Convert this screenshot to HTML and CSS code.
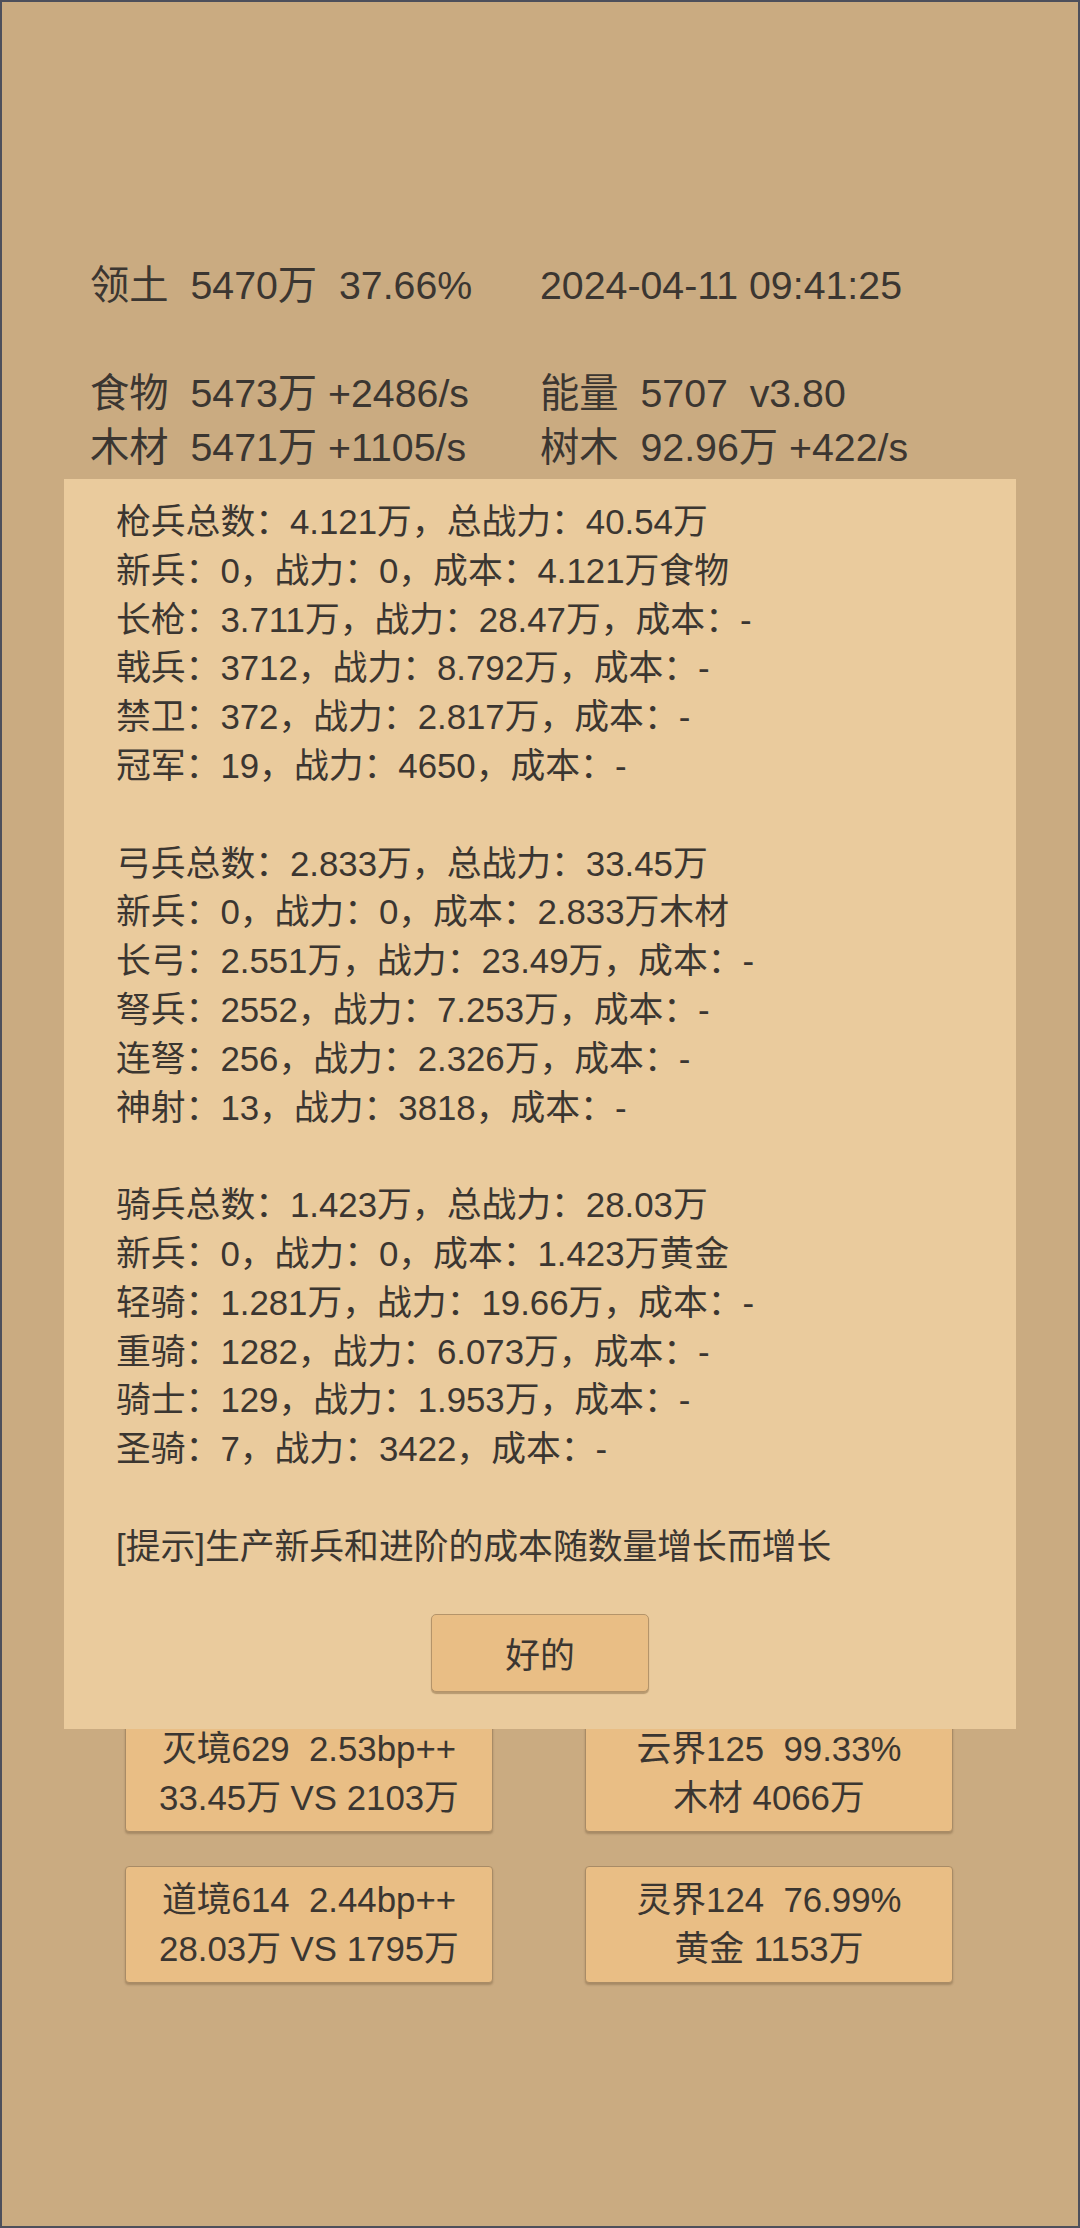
FILE: index.html
```html
<!DOCTYPE html>
<html lang="zh-CN">
<head>
<meta charset="utf-8">
<title>领土</title>
<link rel="stylesheet" href="styles.css">
</head>
<body>
<div class="screen">
  <div class="stats">
    <div class="row"><span class="cell">领土  5470万  37.66%</span><span class="cell">2024-04-11 09:41:25</span></div>
    <div class="row"></div>
    <div class="row"><span class="cell">食物  5473万 +2486/s</span><span class="cell">能量  5707  v3.80</span></div>
    <div class="row"><span class="cell">木材  5471万 +1105/s</span><span class="cell">树木  92.96万 +422/s</span></div>
  </div>

  <div class="realms">
    <div class="card"><div>灭境629  2.53bp++</div><div>33.45万 VS 2103万</div></div>
    <div class="card"><div>云界125  99.33%</div><div>木材 4066万</div></div>
    <div class="card"><div>道境614  2.44bp++</div><div>28.03万 VS 1795万</div></div>
    <div class="card"><div>灵界124  76.99%</div><div>黄金 1153万</div></div>
  </div>

  <div class="dialog">
    <div class="lines">
      <div class="line">枪兵总数：4.121万，总战力：40.54万</div>
      <div class="line">新兵：0，战力：0，成本：4.121万食物</div>
      <div class="line">长枪：3.711万，战力：28.47万，成本：-</div>
      <div class="line">戟兵：3712，战力：8.792万，成本：-</div>
      <div class="line">禁卫：372，战力：2.817万，成本：-</div>
      <div class="line">冠军：19，战力：4650，成本：-</div>
      <div class="line"></div>
      <div class="line">弓兵总数：2.833万，总战力：33.45万</div>
      <div class="line">新兵：0，战力：0，成本：2.833万木材</div>
      <div class="line">长弓：2.551万，战力：23.49万，成本：-</div>
      <div class="line">弩兵：2552，战力：7.253万，成本：-</div>
      <div class="line">连弩：256，战力：2.326万，成本：-</div>
      <div class="line">神射：13，战力：3818，成本：-</div>
      <div class="line"></div>
      <div class="line">骑兵总数：1.423万，总战力：28.03万</div>
      <div class="line">新兵：0，战力：0，成本：1.423万黄金</div>
      <div class="line">轻骑：1.281万，战力：19.66万，成本：-</div>
      <div class="line">重骑：1282，战力：6.073万，成本：-</div>
      <div class="line">骑士：129，战力：1.953万，成本：-</div>
      <div class="line">圣骑：7，战力：3422，成本：-</div>
      <div class="line"></div>
      <div class="line">[提示]生产新兵和进阶的成本随数量增长而增长</div>
    </div>
    <div class="actions"><button class="ok">好的</button></div>
  </div>
</div>
</body>
</html>
```

FILE: styles.css
```css
html, body {
  margin: 0;
  padding: 0;
}
body {
  background: #caab81;
  font-family: "Liberation Sans", "Noto Sans CJK SC", sans-serif;
  color: #3b3631;
}
.screen {
  position: relative;
  box-sizing: border-box;
  width: 1080px;
  height: 2228px;
  border: 2px solid #4d4f5b;
  background: #caab81;
  overflow: hidden;
}
.stats {
  padding: 256px 0 0 88px;
  font-size: 39.3px;
}
.row {
  display: grid;
  grid-template-columns: 450px 450px;
  height: 54px;
  line-height: 54px;
  white-space: pre;
}
.realms {
  margin: 1241px 0 0 123px;
  display: grid;
  grid-template-columns: 368px 368px;
  column-gap: 92px;
  row-gap: 34px;
}
.card {
  box-sizing: border-box;
  height: 117px;
  padding: 9px 0;
  background: #e9be85;
  border: 1px solid #a88b66;
  border-radius: 4px;
  box-shadow: 0 2px 2px rgba(60, 40, 20, 0.25);
  text-align: center;
  font-size: 34.8px;
  line-height: 48.8px;
  white-space: pre;
}
.dialog {
  position: absolute;
  top: 477px;
  left: 62px;
  width: 952px;
  height: 1250px;
  box-sizing: border-box;
  padding: 19px 0 0 52px;
  background: #eacb9d;
  font-size: 34.8px;
}
.line {
  height: 48.8px;
  line-height: 48.8px;
  white-space: pre;
}
.actions {
  display: flex;
  justify-content: center;
  padding-right: 52px;
  margin-top: 42px;
}
.ok {
  width: 218px;
  height: 78px;
  background: #e9be85;
  border: 1px solid #b4946a;
  border-radius: 5px;
  box-shadow: 0 2px 1px rgba(90, 60, 30, 0.35);
  font-family: "Liberation Sans", "Noto Sans CJK SC", sans-serif;
  font-size: 34.8px;
  color: #3b3631;
  padding: 0;
}
```
